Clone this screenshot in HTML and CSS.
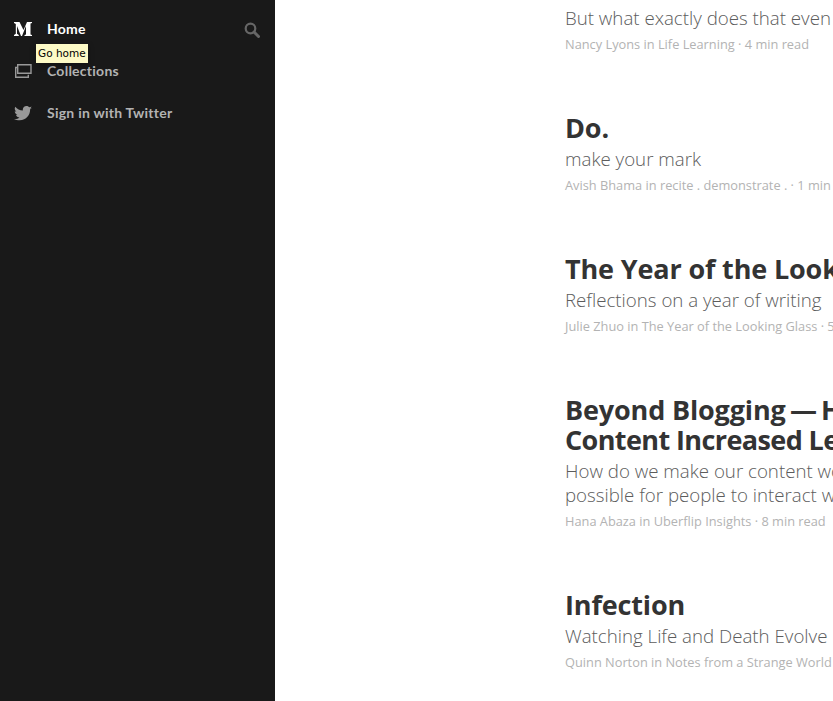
FILE: index.html
```html
<!DOCTYPE html>
<html lang="en">
<head>
<meta charset="utf-8">
<title>Medium</title>
<link rel="stylesheet" href="styles.css">
</head>
<body>
<div class="page">
  <nav class="sidebar">
    <div class="nav-row nav-active">
      <svg class="nav-icon" viewBox="0 0 18 14" width="18" height="14"><path fill="#fff" d="M0 0H5.500L9.500 8L13 0H18V1L16.500 1.600V12.400L18 13V14H10.500V13L12 12.400V4L8 14H7L3 4V11.800L4.800 13V14H0V13L1.800 11.800V2L0 1Z"/></svg>
      <span class="nav-label">Home</span>
      <svg class="search-icon" viewBox="0 0 16 16" width="16" height="16"><circle cx="6.500" cy="6.500" r="4.800" fill="none" stroke="#666" stroke-width="2.200"/><path d="M10 10l4.500 4.500" stroke="#666" stroke-width="3" stroke-linecap="round"/></svg>
    </div>
    <div class="nav-row">
      <svg class="nav-icon" viewBox="0 0 18 14" width="18" height="14"><path fill="none" stroke="#999" stroke-width="1.400" d="M3.700 .7h13.300v8.600H3.700z"/><path fill="none" stroke="#999" stroke-width="1.400" d="M3.700 3.500H1.700v9.800h12.600v-2.600"/></svg>
      <span class="nav-label">Collections</span>
    </div>
    <div class="nav-row">
      <svg class="nav-icon" viewBox="0 0 24 20" width="18" height="15"><path fill="#999" d="M24 2.400c-.9.4-1.800.7-2.800.8 1-.6 1.800-1.600 2.200-2.700-1 .6-2 1-3.100 1.200C19.300.7 18 0 16.600 0c-2.700 0-4.900 2.200-4.900 4.900 0 .4 0 .8.1 1.100C7.700 5.800 4.100 3.900 1.700.900c-.4.700-.7 1.600-.7 2.500 0 1.700.9 3.200 2.200 4.100-.8 0-1.600-.2-2.200-.6v.1c0 2.400 1.700 4.400 3.900 4.800-.4.100-.8.200-1.300.2-.3 0-.6 0-.9-.1.6 2 2.400 3.400 4.600 3.400-1.700 1.300-3.800 2.100-6.100 2.100-.4 0-.8 0-1.200-.1C2.200 18.200 4.800 19 7.500 19c9.100 0 14-7.500 14-14v-.6c1-.7 1.800-1.600 2.500-2z"/></svg>
      <span class="nav-label">Sign in with Twitter</span>
    </div>
    <div class="tooltip">Go home</div>
  </nav>
  <main class="feed">
    <article class="post">
      <p class="sub">But what exactly does that even mean?</p>
      <p class="meta">Nancy Lyons in Life Learning · 4 min read</p>
    </article>
    <article class="post">
      <h2 class="title">Do.</h2>
      <p class="sub">make your mark</p>
      <p class="meta">Avish Bhama in recite . demonstrate . · 1 min read</p>
    </article>
    <article class="post">
      <h2 class="title">The Year of the Looking Glass</h2>
      <p class="sub">Reflections on a year of writing</p>
      <p class="meta">Julie Zhuo in The Year of the Looking Glass · 5 min read</p>
    </article>
    <article class="post">
      <h2 class="title">Beyond Blogging&thinsp;—&thinsp;How Interactive<br><span class="title-tight">Content Increased Leads</span></h2>
      <p class="sub">How do we make our content work harder and<br>possible for people to interact with it?</p>
      <p class="meta">Hana Abaza in Uberflip Insights · 8 min read</p>
    </article>
    <article class="post">
      <h2 class="title">Infection</h2>
      <p class="sub">Watching Life and Death Evolve</p>
      <p class="meta">Quinn Norton in Notes from a Strange World · 6 min read</p>
    </article>
  </main>
</div>
</body>
</html>
```
FILE: styles.css
```css
html, body {
  margin: 0;
  padding: 0;
  height: 100%;
  overflow: hidden;
  background: #fff;
}
.page {
  display: flex;
  height: 701px;
  overflow: hidden;
  font-family: "Open Sans", "Noto Sans", sans-serif;
  font-variant-ligatures: none;
}
.sidebar {
  position: relative;
  flex: 0 0 275px;
  box-sizing: border-box;
  padding: 7px 14px 0;
  background: #191919;
}
.nav-row {
  display: flex;
  align-items: center;
  height: 42px;
  color: #b3b3b3;
  font-family: "Lato", sans-serif;
  font-size: 14px;
  font-weight: 700;
  letter-spacing: 0.25px;
}
.nav-active {
  color: #fff;
}
.nav-icon {
  flex: none;
  margin-top: 2px;
  margin-right: 15px;
}
.nav-label {
  flex: 1;
}
.search-icon {
  flex: none;
  margin-top: 3px;
  margin-right: 1px;
}
.tooltip {
  position: absolute;
  left: 36px;
  top: 44px;
  box-sizing: border-box;
  width: 52px;
  height: 19px;
  padding-left: 2px;
  background: #fdfac6;
  box-shadow: 0 2px 6px rgba(0, 0, 0, 0.3);
  color: #000;
  font: 10.500px/19px "DejaVu Sans", sans-serif;
  white-space: nowrap;
}
.feed {
  flex: 1;
  min-width: 0;
  overflow: hidden;
  padding-left: 290px;
  padding-top: 6px;
  white-space: nowrap;
}
.post {
  margin-bottom: 60px;
}
.title {
  margin: 0 0 4px;
  color: #333;
  font-size: 27px;
  font-weight: 700;
  line-height: 30px;
  letter-spacing: -0.15px;
}
.title-tight {
  letter-spacing: -0.6px;
}
.sub {
  margin: 0;
  color: #5c5c5c;
  font-size: 18.700px;
  font-weight: 300;
  line-height: 24px;
}
.meta {
  margin: 5px 0 0;
  color: #b3b3b3;
  font-size: 12.800px;
  line-height: 18px;
}
```
